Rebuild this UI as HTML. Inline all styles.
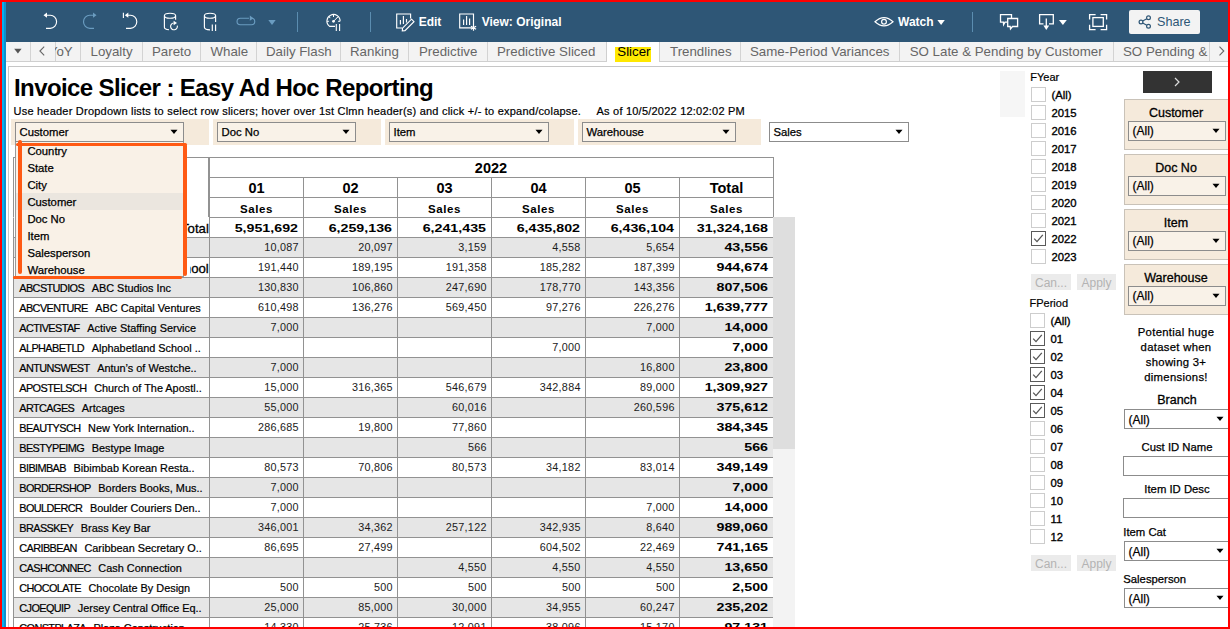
<!DOCTYPE html>
<html><head><meta charset="utf-8"><title>Invoice Slicer</title>
<style>
*{box-sizing:border-box;margin:0;padding:0}
html,body{width:1230px;height:629px;overflow:hidden;background:#fff;font-family:"Liberation Sans",sans-serif;color:#000}
.b,.t{position:absolute}
.t{white-space:nowrap}
svg.b{overflow:visible}
</style></head><body>
<div class="b" style="left:0px;top:0px;width:1230px;height:629px;background:#ff0000"></div>
<div class="b" style="left:2px;top:2px;width:1226px;height:625px;background:#fff"></div>
<div class="b" style="left:2px;top:2px;width:4px;height:625px;background:linear-gradient(90deg,#05b0f0 0,#05b0f0 50%,#0f8fcc 50%,#0f8fcc 100%)"></div>
<div class="b" style="left:6px;top:2px;width:1222px;height:40px;background:#2e5676"></div>
<div class="b" style="left:297px;top:12px;width:1px;height:20px;background:#5b8db0"></div>
<div class="b" style="left:370px;top:12px;width:1px;height:20px;background:#5b8db0"></div>
<div class="b" style="left:972px;top:12px;width:1px;height:20px;background:#5b8db0"></div>
<svg class="b" style="left:0;top:0" width="1230" height="44" viewBox="0 0 1230 44"><path d="M45.5 15.2 H50.3 A6.3 6.6 0 0 1 50.3 28.4 H46" fill="none" stroke="#ffffff" stroke-width="1.15"/><path d="M43.5 15.2 L47 12.6 L47 17.8 Z" fill="#ffffff"/><path d="M94.5 15.2 H89.8 A6.3 6.6 0 0 0 89.8 28.4 H94" fill="none" stroke="#6a9cc0" stroke-width="1.15"/><path d="M96.5 15.2 L93 12.6 L93 17.8 Z" fill="#6a9cc0"/><path d="M127 15.2 H130.5 A6.3 6.6 0 0 1 130.5 28.4 H126" fill="none" stroke="#ffffff" stroke-width="1.15"/><path d="M124.8 15.2 L128.3 12.6 L128.3 17.8 Z" fill="#ffffff"/><path d="M123.4 12.8 V18" stroke="#ffffff" stroke-width="1.15"/><ellipse cx="170" cy="15.7" rx="5.6" ry="2.5" fill="none" stroke="#ffffff" stroke-width="1.15"/><path d="M164.4 15.7 V27.3 A5.6 2.5 0 0 0 169 29.8" fill="none" stroke="#ffffff" stroke-width="1.15"/><path d="M175.6 15.7 V19.8" fill="none" stroke="#ffffff" stroke-width="1.15"/><path d="M177.3 25.6 A3.4 3.4 0 1 1 173.6 23" fill="none" stroke="#ffffff" stroke-width="1.15"/><path d="M173.6 20.8 L177 23 L173.6 25.2 Z" fill="#ffffff"/><ellipse cx="210" cy="15.7" rx="5.6" ry="2.5" fill="none" stroke="#ffffff" stroke-width="1.15"/><path d="M204.4 15.7 V27.3 A5.6 2.5 0 0 0 210 29.8" fill="none" stroke="#ffffff" stroke-width="1.15"/><path d="M215.6 15.7 V22" fill="none" stroke="#ffffff" stroke-width="1.15"/><path d="M212.3 24.5 V31 M215.6 24.5 V31" fill="none" stroke="#ffffff" stroke-width="1.15"/><path d="M249 18.2 H240.3 A3.2 3.2 0 0 0 240.3 24.7 H251.5 A3.2 3.2 0 0 0 251.5 18.2" fill="none" stroke="#6a9cc0" stroke-width="1.15"/><path d="M253.5 18.2 L249.8 15.6 L249.8 20.8 Z" fill="#6a9cc0"/><path d="M268.3 20 H275.7 L272 24.9 Z" fill="#6a9cc0"/><path d="M335 26.4 H329.6 A6.6 6.6 0 1 1 340.1 21.3" fill="none" stroke="#ffffff" stroke-width="1.1"/><path d="M333.5 15 V17 M326.9 21.3 H328.9 M338.1 21.3 H340.1 M328.9 16.7 L330.3 18.1 M338.1 16.7 L336.7 18.1" fill="none" stroke="#ffffff" stroke-width="1"/><circle cx="333.5" cy="21.3" r="1.4" fill="#ffffff"/><path d="M333.5 21.3 L337.3 17.5" stroke="#ffffff" stroke-width="1"/><path d="M336.3 24 V31 M339.6 24 V31" fill="none" stroke="#ffffff" stroke-width="1.1"/><path d="M402 28 H396.7 V14 H410.6 V18.5" fill="none" stroke="#ffffff" stroke-width="1.15"/><path d="M400.4 20 V24.6 M403.4 16 V24 M406.5 19 V22.6" fill="none" stroke="#ffffff" stroke-width="1.15"/><path d="M411.5 19.2 L414 21.7 L405 30.7 L402.3 30.9 L402.5 28.2 Z" fill="none" stroke="#ffffff" stroke-width="1.15"/><path d="M472 27.8 H459.7 V14 H473.5 V25" fill="none" stroke="#ffffff" stroke-width="1.15"/><path d="M463.6 19.5 V25 M466.6 16 V25 M469.6 18.5 V25" fill="none" stroke="#ffffff" stroke-width="1.15"/><path d="M473.5 24.8 V30.8 M470.9 26.3 L476.1 29.3 M470.9 29.3 L476.1 26.3" fill="none" stroke="#ffffff" stroke-width="1.2"/><path d="M875 21.8 Q884 13.5 893 21.8 Q884 30 875 21.8 Z" fill="none" stroke="#ffffff" stroke-width="1.2"/><circle cx="884" cy="21.8" r="2.4" fill="none" stroke="#ffffff" stroke-width="1.2"/><path d="M937.4 20 H944.8 L941.1 25 Z" fill="#ffffff"/><path d="M1007.5 22.2 H1005 L1003.6 24.6 L1003.4 22.2 H1000.5 V14.6 H1011.5 V18.4" fill="none" stroke="#ffffff" stroke-width="1.3"/><path d="M1007.7 18.5 H1017.6 V26.5 H1012.5 L1010.5 29 L1010.2 26.5 H1007.7 Z" fill="none" stroke="#ffffff" stroke-width="1.3"/><path d="M1043.5 23.8 H1039.6 V14.6 H1053.3 V23.8 H1049" fill="none" stroke="#ffffff" stroke-width="1.3"/><path d="M1046.3 18.5 V26" stroke="#ffffff" stroke-width="1.3"/><path d="M1043.4 25.4 H1049.2 L1046.3 29.9 Z" fill="#ffffff"/><path d="M1059 20 H1066.8 L1062.9 25 Z" fill="#ffffff"/><path d="M1089.6 19.4 V14.6 H1095.6 M1100.6 14.6 H1106.6 V19.4 M1106.6 24.8 V29.6 H1100.6 M1095.6 29.6 H1089.6 V24.8" fill="none" stroke="#ffffff" stroke-width="1.3"/><rect x="1092.9" y="17.6" width="10.4" height="8.8" fill="none" stroke="#ffffff" stroke-width="1.3"/></svg>
<div class="t" style="top:15.14px;font-size:12px;line-height:14.4px;font-weight:bold;color:#fff;left:418.7px;">Edit</div>
<div class="t" style="top:15.14px;font-size:12px;line-height:14.4px;font-weight:bold;color:#fff;left:481.7px;">View: Original</div>
<div class="t" style="top:15.14px;font-size:12px;line-height:14.4px;font-weight:bold;color:#fff;left:898px;">Watch</div>
<div class="b" style="left:1129px;top:10px;width:71px;height:24px;background:#f3f3f3;border-radius:2px"></div>
<svg class="b" style="left:1136px;top:14px" width="18" height="16" viewBox="1136 14 18 16"><g fill="none" stroke="#2e5676" stroke-width="1.2"><circle cx="1141" cy="22" r="1.9"/><circle cx="1148.5" cy="17.8" r="1.9"/><circle cx="1148.5" cy="26.2" r="1.9"/><path d="M1142.7 21 L1146.8 18.8 M1142.7 23 L1146.8 25.2"/></g></svg>
<div class="t" style="top:14.57px;font-size:12.6px;line-height:15.12px;color:#2e5676;left:1157px;">Share</div>
<div class="b" style="left:6px;top:42px;width:1222px;height:19px;background:#f3f3f3"></div>
<div class="b" style="left:6px;top:61px;width:1222px;height:1px;background:#cfcfcf"></div>
<div class="b" style="left:30px;top:42px;width:1px;height:19px;background:#d3d3d3"></div>
<div class="b" style="left:55px;top:42px;width:1px;height:19px;background:#d3d3d3"></div>
<div class="b" style="left:80px;top:42px;width:1px;height:19px;background:#d3d3d3"></div>
<div class="b" style="left:142px;top:42px;width:1px;height:19px;background:#d3d3d3"></div>
<div class="b" style="left:200px;top:42px;width:1px;height:19px;background:#d3d3d3"></div>
<div class="b" style="left:256px;top:42px;width:1px;height:19px;background:#d3d3d3"></div>
<div class="b" style="left:340px;top:42px;width:1px;height:19px;background:#d3d3d3"></div>
<div class="b" style="left:408px;top:42px;width:1px;height:19px;background:#d3d3d3"></div>
<div class="b" style="left:487px;top:42px;width:1px;height:19px;background:#d3d3d3"></div>
<div class="b" style="left:606px;top:42px;width:1px;height:19px;background:#d3d3d3"></div>
<div class="b" style="left:659px;top:42px;width:1px;height:19px;background:#d3d3d3"></div>
<div class="b" style="left:740px;top:42px;width:1px;height:19px;background:#d3d3d3"></div>
<div class="b" style="left:899px;top:42px;width:1px;height:19px;background:#d3d3d3"></div>
<div class="b" style="left:1113px;top:42px;width:1px;height:19px;background:#d3d3d3"></div>
<div class="b" style="left:1209px;top:42px;width:1px;height:19px;background:#d3d3d3"></div>
<div class="b" style="left:606px;top:42px;width:54px;height:20px;background:#fff;border-left:1px solid #cfcfcf;border-right:1px solid #cfcfcf"></div>
<div class="b" style="left:615px;top:47px;width:36px;height:15px;background:#ffe800"></div>
<svg class="b" style="left:0;top:42px" width="1230" height="20" viewBox="0 42 1230 20"><path d="M14.2 48.8 H21.6 L17.9 53.5 Z" fill="#555"/><path d="M44.2 46.6 L39.9 51 L44.2 55.4" fill="none" stroke="#666" stroke-width="1.1"/><path d="M1219.5 46.6 L1223.8 51 L1219.5 55.4" fill="none" stroke="#666" stroke-width="1.1"/></svg>
<div class="b" style="left:55px;top:42px;width:25px;height:19px;overflow:hidden"><div class="t" style="left:-6.2px;top:1.6px;font-size:13.3px;line-height:16px;color:#666">YoY</div></div>
<div class="t" style="top:43.61px;font-size:13.3px;line-height:15.96px;color:#666;left:90.5px;">Loyalty</div>
<div class="t" style="top:43.61px;font-size:13.3px;line-height:15.96px;color:#666;left:152px;">Pareto</div>
<div class="t" style="top:43.61px;font-size:13.3px;line-height:15.96px;color:#666;left:210.5px;">Whale</div>
<div class="t" style="top:43.61px;font-size:13.3px;line-height:15.96px;color:#666;left:266px;">Daily Flash</div>
<div class="t" style="top:43.61px;font-size:13.3px;line-height:15.96px;color:#666;left:350px;">Ranking</div>
<div class="t" style="top:43.61px;font-size:13.3px;line-height:15.96px;color:#666;left:419px;">Predictive</div>
<div class="t" style="top:43.61px;font-size:13.3px;line-height:15.96px;color:#666;left:497px;">Predictive Sliced</div>
<div class="t" style="top:43.61px;font-size:13.3px;line-height:15.96px;left:617.3px;">Slicer</div>
<div class="t" style="top:43.61px;font-size:13.3px;line-height:15.96px;color:#666;left:670px;">Trendlines</div>
<div class="t" style="top:43.61px;font-size:13.3px;line-height:15.96px;color:#666;left:750px;">Same-Period Variances</div>
<div class="t" style="top:43.61px;font-size:13.3px;line-height:15.96px;color:#666;left:909.7px;">SO Late &amp; Pending by Customer</div>
<div class="t" style="top:43.61px;font-size:13.3px;line-height:15.96px;color:#666;left:1123px;">SO Pending &amp;</div>
<div class="b" style="left:8px;top:66px;width:1220px;height:561px;border-left:1px solid #c6c6c6;border-top:1px solid #c6c6c6;background:#fff"></div>
<div class="t" style="top:74.48px;font-size:24px;line-height:28.8px;font-weight:bold;letter-spacing:-0.6px;left:14px;">Invoice Slicer : Easy Ad Hoc Reporting</div>
<div class="t" style="top:104.79px;font-size:11px;line-height:13.2px;letter-spacing:0.22px;-webkit-text-stroke:0.2px #000;left:13.5px;">Use header Dropdown lists to select row slicers; hover over 1st Clmn header(s) and click +/- to expand/colapse.</div>
<div class="t" style="top:104.79px;font-size:11px;line-height:13.2px;letter-spacing:0.22px;-webkit-text-stroke:0.2px #000;left:596.5px;">As of 10/5/2022 12:02:02 PM</div>
<div class="b" style="left:11px;top:119px;width:198px;height:26px;background:#f5eadb"></div>
<div class="b" style="left:15px;top:122px;width:169px;height:20px;background:#f9f2e8;border:1px solid #8c8c8c"></div>
<div class="t" style="top:126.20px;font-size:11.3px;line-height:13.56px;-webkit-text-stroke:0.25px #000;left:19.5px;">Customer</div>
<svg class="b" style="left:169.5px;top:129.0px" width="8" height="6" viewBox="0 0 8 6"><path d="M0.5 0.8 H7.5 L4 5 Z" fill="#000"/></svg>
<div class="b" style="left:213px;top:119px;width:168px;height:26px;background:#f5eadb"></div>
<div class="b" style="left:217px;top:122px;width:139px;height:20px;background:#f9f2e8;border:1px solid #8c8c8c"></div>
<div class="t" style="top:126.20px;font-size:11.3px;line-height:13.56px;-webkit-text-stroke:0.25px #000;left:221.5px;">Doc No</div>
<svg class="b" style="left:341.5px;top:129.0px" width="8" height="6" viewBox="0 0 8 6"><path d="M0.5 0.8 H7.5 L4 5 Z" fill="#000"/></svg>
<div class="b" style="left:385px;top:119px;width:189px;height:26px;background:#f5eadb"></div>
<div class="b" style="left:389px;top:122px;width:160px;height:20px;background:#f9f2e8;border:1px solid #8c8c8c"></div>
<div class="t" style="top:126.20px;font-size:11.3px;line-height:13.56px;-webkit-text-stroke:0.25px #000;left:393.5px;">Item</div>
<svg class="b" style="left:534.5px;top:129.0px" width="8" height="6" viewBox="0 0 8 6"><path d="M0.5 0.8 H7.5 L4 5 Z" fill="#000"/></svg>
<div class="b" style="left:578px;top:119px;width:183px;height:26px;background:#f5eadb"></div>
<div class="b" style="left:582px;top:122px;width:154px;height:20px;background:#f9f2e8;border:1px solid #8c8c8c"></div>
<div class="t" style="top:126.20px;font-size:11.3px;line-height:13.56px;-webkit-text-stroke:0.25px #000;left:586.5px;">Warehouse</div>
<svg class="b" style="left:721.5px;top:129.0px" width="8" height="6" viewBox="0 0 8 6"><path d="M0.5 0.8 H7.5 L4 5 Z" fill="#000"/></svg>
<div class="b" style="left:769px;top:122px;width:140px;height:20px;background:#fff;border:1px solid #8c8c8c"></div>
<div class="t" style="top:126.20px;font-size:11.3px;line-height:13.56px;-webkit-text-stroke:0.25px #000;left:773.5px;">Sales</div>
<svg class="b" style="left:894.5px;top:129.0px" width="8" height="6" viewBox="0 0 8 6"><path d="M0.5 0.8 H7.5 L4 5 Z" fill="#000"/></svg>
<div class="b" style="left:13px;top:157px;width:196px;height:61px;border:1px solid #929292;border-bottom:none;background:#fff"></div>
<div class="b" style="left:209px;top:157px;width:565px;height:21px;border:1px solid #929292;background:#fff"></div>
<div class="b" style="left:209px;top:177px;width:95px;height:21px;border:1px solid #929292;background:#fff"></div>
<div class="b" style="left:209px;top:197px;width:95px;height:21px;border:1px solid #929292;background:#fff"></div>
<div class="b" style="left:303px;top:177px;width:95px;height:21px;border:1px solid #929292;background:#fff"></div>
<div class="b" style="left:303px;top:197px;width:95px;height:21px;border:1px solid #929292;background:#fff"></div>
<div class="b" style="left:397px;top:177px;width:95px;height:21px;border:1px solid #929292;background:#fff"></div>
<div class="b" style="left:397px;top:197px;width:95px;height:21px;border:1px solid #929292;background:#fff"></div>
<div class="b" style="left:491px;top:177px;width:95px;height:21px;border:1px solid #929292;background:#fff"></div>
<div class="b" style="left:491px;top:197px;width:95px;height:21px;border:1px solid #929292;background:#fff"></div>
<div class="b" style="left:585px;top:177px;width:95px;height:21px;border:1px solid #929292;background:#fff"></div>
<div class="b" style="left:585px;top:197px;width:95px;height:21px;border:1px solid #929292;background:#fff"></div>
<div class="b" style="left:679px;top:177px;width:95px;height:21px;border:1px solid #929292;background:#fff"></div>
<div class="b" style="left:679px;top:197px;width:95px;height:21px;border:1px solid #929292;background:#fff"></div>
<div class="t" style="top:159.88px;font-size:14.5px;line-height:17.4px;font-weight:bold;left:341.0px;width:300px;text-align:center;">2022</div>
<div class="t" style="top:179.58px;font-size:14.5px;line-height:17.4px;font-weight:bold;left:106.5px;width:300px;text-align:center;">01</div>
<div class="t" style="top:202.72px;font-size:11.5px;line-height:13.8px;font-weight:bold;letter-spacing:0.6px;left:106.5px;width:300px;text-align:center;">Sales</div>
<div class="t" style="top:179.58px;font-size:14.5px;line-height:17.4px;font-weight:bold;left:200.5px;width:300px;text-align:center;">02</div>
<div class="t" style="top:202.72px;font-size:11.5px;line-height:13.8px;font-weight:bold;letter-spacing:0.6px;left:200.5px;width:300px;text-align:center;">Sales</div>
<div class="t" style="top:179.58px;font-size:14.5px;line-height:17.4px;font-weight:bold;left:294.5px;width:300px;text-align:center;">03</div>
<div class="t" style="top:202.72px;font-size:11.5px;line-height:13.8px;font-weight:bold;letter-spacing:0.6px;left:294.5px;width:300px;text-align:center;">Sales</div>
<div class="t" style="top:179.58px;font-size:14.5px;line-height:17.4px;font-weight:bold;left:388.5px;width:300px;text-align:center;">04</div>
<div class="t" style="top:202.72px;font-size:11.5px;line-height:13.8px;font-weight:bold;letter-spacing:0.6px;left:388.5px;width:300px;text-align:center;">Sales</div>
<div class="t" style="top:179.58px;font-size:14.5px;line-height:17.4px;font-weight:bold;left:482.5px;width:300px;text-align:center;">05</div>
<div class="t" style="top:202.72px;font-size:11.5px;line-height:13.8px;font-weight:bold;letter-spacing:0.6px;left:482.5px;width:300px;text-align:center;">Sales</div>
<div class="t" style="top:179.58px;font-size:14.5px;line-height:17.4px;font-weight:bold;left:576.5px;width:300px;text-align:center;">Total</div>
<div class="t" style="top:202.72px;font-size:11.5px;line-height:13.8px;font-weight:bold;letter-spacing:0.6px;left:576.5px;width:300px;text-align:center;">Sales</div>
<div class="b" style="left:13px;top:217px;width:761px;height:21px;border:1px solid #929292;border-top-color:#fff;background:#fff"></div>
<div class="b" style="left:209px;top:217px;width:95px;height:21px;border:1px solid #929292"></div>
<div class="b" style="left:303px;top:217px;width:95px;height:21px;border:1px solid #929292"></div>
<div class="b" style="left:397px;top:217px;width:95px;height:21px;border:1px solid #929292"></div>
<div class="b" style="left:491px;top:217px;width:95px;height:21px;border:1px solid #929292"></div>
<div class="b" style="left:585px;top:217px;width:95px;height:21px;border:1px solid #929292"></div>
<div class="b" style="left:679px;top:217px;width:95px;height:21px;border:1px solid #929292"></div>
<div class="b" style="left:187px;top:218px;width:21.8px;height:19px;overflow:hidden">
<div class="t" style="top:2.61px;font-size:13.2px;line-height:15.84px;-webkit-text-stroke:0.3px #000;left:-378.20px;width:400px;text-align:right;">Grand Total</div>
</div>
<div class="t" style="top:221.70px;font-size:11.3px;line-height:13.56px;font-weight:bold;left:-101.70px;width:400px;text-align:right;transform:scaleX(1.26);transform-origin:100% 50%">5,951,692</div>
<div class="t" style="top:221.70px;font-size:11.3px;line-height:13.56px;font-weight:bold;left:-7.70px;width:400px;text-align:right;transform:scaleX(1.26);transform-origin:100% 50%">6,259,136</div>
<div class="t" style="top:221.70px;font-size:11.3px;line-height:13.56px;font-weight:bold;left:86.30px;width:400px;text-align:right;transform:scaleX(1.26);transform-origin:100% 50%">6,241,435</div>
<div class="t" style="top:221.70px;font-size:11.3px;line-height:13.56px;font-weight:bold;left:180.30px;width:400px;text-align:right;transform:scaleX(1.26);transform-origin:100% 50%">6,435,802</div>
<div class="t" style="top:221.70px;font-size:11.3px;line-height:13.56px;font-weight:bold;left:274.30px;width:400px;text-align:right;transform:scaleX(1.26);transform-origin:100% 50%">6,436,104</div>
<div class="t" style="top:221.70px;font-size:11.3px;line-height:13.56px;font-weight:bold;left:368.30px;width:400px;text-align:right;transform:scaleX(1.26);transform-origin:100% 50%">31,324,168</div>
<div class="b" style="left:13px;top:237px;width:197px;height:21px;border:1px solid #929292;background:#e6e6e6"></div>
<div class="b" style="left:209px;top:237px;width:95px;height:21px;border:1px solid #929292;background:#e6e6e6"></div>
<div class="b" style="left:303px;top:237px;width:95px;height:21px;border:1px solid #929292;background:#e6e6e6"></div>
<div class="b" style="left:397px;top:237px;width:95px;height:21px;border:1px solid #929292;background:#e6e6e6"></div>
<div class="b" style="left:491px;top:237px;width:95px;height:21px;border:1px solid #929292;background:#e6e6e6"></div>
<div class="b" style="left:585px;top:237px;width:95px;height:21px;border:1px solid #929292;background:#e6e6e6"></div>
<div class="b" style="left:679px;top:237px;width:95px;height:21px;border:1px solid #929292;background:#e6e6e6"></div>
<div class="t" style="top:240.78px;font-size:10.8px;line-height:12.96px;color:#1a1a1a;letter-spacing:0.25px;left:-101.35px;width:400px;text-align:right;">10,087</div>
<div class="t" style="top:240.78px;font-size:10.8px;line-height:12.96px;color:#1a1a1a;letter-spacing:0.25px;left:-7.35px;width:400px;text-align:right;">20,097</div>
<div class="t" style="top:240.78px;font-size:10.8px;line-height:12.96px;color:#1a1a1a;letter-spacing:0.25px;left:86.65px;width:400px;text-align:right;">3,159</div>
<div class="t" style="top:240.78px;font-size:10.8px;line-height:12.96px;color:#1a1a1a;letter-spacing:0.25px;left:180.65px;width:400px;text-align:right;">4,558</div>
<div class="t" style="top:240.78px;font-size:10.8px;line-height:12.96px;color:#1a1a1a;letter-spacing:0.25px;left:274.65px;width:400px;text-align:right;">5,654</div>
<div class="t" style="top:241.40px;font-size:11.3px;line-height:13.56px;font-weight:bold;left:368.30px;width:400px;text-align:right;transform:scaleX(1.26);transform-origin:100% 50%">43,556</div>
<div class="b" style="left:13px;top:257px;width:197px;height:21px;border:1px solid #929292;background:#fff"></div>
<div class="b" style="left:209px;top:257px;width:95px;height:21px;border:1px solid #929292;background:#fff"></div>
<div class="b" style="left:303px;top:257px;width:95px;height:21px;border:1px solid #929292;background:#fff"></div>
<div class="b" style="left:397px;top:257px;width:95px;height:21px;border:1px solid #929292;background:#fff"></div>
<div class="b" style="left:491px;top:257px;width:95px;height:21px;border:1px solid #929292;background:#fff"></div>
<div class="b" style="left:585px;top:257px;width:95px;height:21px;border:1px solid #929292;background:#fff"></div>
<div class="b" style="left:679px;top:257px;width:95px;height:21px;border:1px solid #929292;background:#fff"></div>
<div class="t" style="top:260.78px;font-size:10.8px;line-height:12.96px;color:#1a1a1a;letter-spacing:0.25px;left:-101.35px;width:400px;text-align:right;">191,440</div>
<div class="t" style="top:260.78px;font-size:10.8px;line-height:12.96px;color:#1a1a1a;letter-spacing:0.25px;left:-7.35px;width:400px;text-align:right;">189,195</div>
<div class="t" style="top:260.78px;font-size:10.8px;line-height:12.96px;color:#1a1a1a;letter-spacing:0.25px;left:86.65px;width:400px;text-align:right;">191,358</div>
<div class="t" style="top:260.78px;font-size:10.8px;line-height:12.96px;color:#1a1a1a;letter-spacing:0.25px;left:180.65px;width:400px;text-align:right;">185,282</div>
<div class="t" style="top:260.78px;font-size:10.8px;line-height:12.96px;color:#1a1a1a;letter-spacing:0.25px;left:274.65px;width:400px;text-align:right;">187,399</div>
<div class="t" style="top:261.40px;font-size:11.3px;line-height:13.56px;font-weight:bold;left:368.30px;width:400px;text-align:right;transform:scaleX(1.26);transform-origin:100% 50%">944,674</div>
<div class="b" style="left:13px;top:277px;width:197px;height:21px;border:1px solid #929292;background:#e6e6e6"></div>
<div class="b" style="left:209px;top:277px;width:95px;height:21px;border:1px solid #929292;background:#e6e6e6"></div>
<div class="b" style="left:303px;top:277px;width:95px;height:21px;border:1px solid #929292;background:#e6e6e6"></div>
<div class="b" style="left:397px;top:277px;width:95px;height:21px;border:1px solid #929292;background:#e6e6e6"></div>
<div class="b" style="left:491px;top:277px;width:95px;height:21px;border:1px solid #929292;background:#e6e6e6"></div>
<div class="b" style="left:585px;top:277px;width:95px;height:21px;border:1px solid #929292;background:#e6e6e6"></div>
<div class="b" style="left:679px;top:277px;width:95px;height:21px;border:1px solid #929292;background:#e6e6e6"></div>
<div class="t" style="top:282.08px;font-size:10.9px;line-height:13.08px;-webkit-text-stroke:0.2px #000;left:19.3px;"><span style="margin-right:7.6px;letter-spacing:-0.6px">ABCSTUDIOS</span>ABC Studios Inc</div>
<div class="t" style="top:280.78px;font-size:10.8px;line-height:12.96px;color:#1a1a1a;letter-spacing:0.25px;left:-101.35px;width:400px;text-align:right;">130,830</div>
<div class="t" style="top:280.78px;font-size:10.8px;line-height:12.96px;color:#1a1a1a;letter-spacing:0.25px;left:-7.35px;width:400px;text-align:right;">106,860</div>
<div class="t" style="top:280.78px;font-size:10.8px;line-height:12.96px;color:#1a1a1a;letter-spacing:0.25px;left:86.65px;width:400px;text-align:right;">247,690</div>
<div class="t" style="top:280.78px;font-size:10.8px;line-height:12.96px;color:#1a1a1a;letter-spacing:0.25px;left:180.65px;width:400px;text-align:right;">178,770</div>
<div class="t" style="top:280.78px;font-size:10.8px;line-height:12.96px;color:#1a1a1a;letter-spacing:0.25px;left:274.65px;width:400px;text-align:right;">143,356</div>
<div class="t" style="top:281.40px;font-size:11.3px;line-height:13.56px;font-weight:bold;left:368.30px;width:400px;text-align:right;transform:scaleX(1.26);transform-origin:100% 50%">807,506</div>
<div class="b" style="left:13px;top:297px;width:197px;height:21px;border:1px solid #929292;background:#fff"></div>
<div class="b" style="left:209px;top:297px;width:95px;height:21px;border:1px solid #929292;background:#fff"></div>
<div class="b" style="left:303px;top:297px;width:95px;height:21px;border:1px solid #929292;background:#fff"></div>
<div class="b" style="left:397px;top:297px;width:95px;height:21px;border:1px solid #929292;background:#fff"></div>
<div class="b" style="left:491px;top:297px;width:95px;height:21px;border:1px solid #929292;background:#fff"></div>
<div class="b" style="left:585px;top:297px;width:95px;height:21px;border:1px solid #929292;background:#fff"></div>
<div class="b" style="left:679px;top:297px;width:95px;height:21px;border:1px solid #929292;background:#fff"></div>
<div class="t" style="top:302.08px;font-size:10.9px;line-height:13.08px;-webkit-text-stroke:0.2px #000;left:19.3px;"><span style="margin-right:7.6px;letter-spacing:-0.6px">ABCVENTURE</span>ABC Capital Ventures</div>
<div class="t" style="top:300.78px;font-size:10.8px;line-height:12.96px;color:#1a1a1a;letter-spacing:0.25px;left:-101.35px;width:400px;text-align:right;">610,498</div>
<div class="t" style="top:300.78px;font-size:10.8px;line-height:12.96px;color:#1a1a1a;letter-spacing:0.25px;left:-7.35px;width:400px;text-align:right;">136,276</div>
<div class="t" style="top:300.78px;font-size:10.8px;line-height:12.96px;color:#1a1a1a;letter-spacing:0.25px;left:86.65px;width:400px;text-align:right;">569,450</div>
<div class="t" style="top:300.78px;font-size:10.8px;line-height:12.96px;color:#1a1a1a;letter-spacing:0.25px;left:180.65px;width:400px;text-align:right;">97,276</div>
<div class="t" style="top:300.78px;font-size:10.8px;line-height:12.96px;color:#1a1a1a;letter-spacing:0.25px;left:274.65px;width:400px;text-align:right;">226,276</div>
<div class="t" style="top:301.40px;font-size:11.3px;line-height:13.56px;font-weight:bold;left:368.30px;width:400px;text-align:right;transform:scaleX(1.26);transform-origin:100% 50%">1,639,777</div>
<div class="b" style="left:13px;top:317px;width:197px;height:21px;border:1px solid #929292;background:#e6e6e6"></div>
<div class="b" style="left:209px;top:317px;width:95px;height:21px;border:1px solid #929292;background:#e6e6e6"></div>
<div class="b" style="left:303px;top:317px;width:95px;height:21px;border:1px solid #929292;background:#e6e6e6"></div>
<div class="b" style="left:397px;top:317px;width:95px;height:21px;border:1px solid #929292;background:#e6e6e6"></div>
<div class="b" style="left:491px;top:317px;width:95px;height:21px;border:1px solid #929292;background:#e6e6e6"></div>
<div class="b" style="left:585px;top:317px;width:95px;height:21px;border:1px solid #929292;background:#e6e6e6"></div>
<div class="b" style="left:679px;top:317px;width:95px;height:21px;border:1px solid #929292;background:#e6e6e6"></div>
<div class="t" style="top:322.08px;font-size:10.9px;line-height:13.08px;-webkit-text-stroke:0.2px #000;left:19.3px;"><span style="margin-right:7.6px;letter-spacing:-0.6px">ACTIVESTAF</span>Active Staffing Service</div>
<div class="t" style="top:320.78px;font-size:10.8px;line-height:12.96px;color:#1a1a1a;letter-spacing:0.25px;left:-101.35px;width:400px;text-align:right;">7,000</div>
<div class="t" style="top:320.78px;font-size:10.8px;line-height:12.96px;color:#1a1a1a;letter-spacing:0.25px;left:274.65px;width:400px;text-align:right;">7,000</div>
<div class="t" style="top:321.40px;font-size:11.3px;line-height:13.56px;font-weight:bold;left:368.30px;width:400px;text-align:right;transform:scaleX(1.26);transform-origin:100% 50%">14,000</div>
<div class="b" style="left:13px;top:337px;width:197px;height:21px;border:1px solid #929292;background:#fff"></div>
<div class="b" style="left:209px;top:337px;width:95px;height:21px;border:1px solid #929292;background:#fff"></div>
<div class="b" style="left:303px;top:337px;width:95px;height:21px;border:1px solid #929292;background:#fff"></div>
<div class="b" style="left:397px;top:337px;width:95px;height:21px;border:1px solid #929292;background:#fff"></div>
<div class="b" style="left:491px;top:337px;width:95px;height:21px;border:1px solid #929292;background:#fff"></div>
<div class="b" style="left:585px;top:337px;width:95px;height:21px;border:1px solid #929292;background:#fff"></div>
<div class="b" style="left:679px;top:337px;width:95px;height:21px;border:1px solid #929292;background:#fff"></div>
<div class="t" style="top:342.08px;font-size:10.9px;line-height:13.08px;-webkit-text-stroke:0.2px #000;left:19.3px;"><span style="margin-right:7.6px;letter-spacing:-0.6px">ALPHABETLD</span>Alphabetland School ..</div>
<div class="t" style="top:340.78px;font-size:10.8px;line-height:12.96px;color:#1a1a1a;letter-spacing:0.25px;left:180.65px;width:400px;text-align:right;">7,000</div>
<div class="t" style="top:341.40px;font-size:11.3px;line-height:13.56px;font-weight:bold;left:368.30px;width:400px;text-align:right;transform:scaleX(1.26);transform-origin:100% 50%">7,000</div>
<div class="b" style="left:13px;top:357px;width:197px;height:21px;border:1px solid #929292;background:#e6e6e6"></div>
<div class="b" style="left:209px;top:357px;width:95px;height:21px;border:1px solid #929292;background:#e6e6e6"></div>
<div class="b" style="left:303px;top:357px;width:95px;height:21px;border:1px solid #929292;background:#e6e6e6"></div>
<div class="b" style="left:397px;top:357px;width:95px;height:21px;border:1px solid #929292;background:#e6e6e6"></div>
<div class="b" style="left:491px;top:357px;width:95px;height:21px;border:1px solid #929292;background:#e6e6e6"></div>
<div class="b" style="left:585px;top:357px;width:95px;height:21px;border:1px solid #929292;background:#e6e6e6"></div>
<div class="b" style="left:679px;top:357px;width:95px;height:21px;border:1px solid #929292;background:#e6e6e6"></div>
<div class="t" style="top:362.08px;font-size:10.9px;line-height:13.08px;-webkit-text-stroke:0.2px #000;left:19.3px;"><span style="margin-right:7.6px;letter-spacing:-0.6px">ANTUNSWEST</span>Antun’s of Westche..</div>
<div class="t" style="top:360.78px;font-size:10.8px;line-height:12.96px;color:#1a1a1a;letter-spacing:0.25px;left:-101.35px;width:400px;text-align:right;">7,000</div>
<div class="t" style="top:360.78px;font-size:10.8px;line-height:12.96px;color:#1a1a1a;letter-spacing:0.25px;left:274.65px;width:400px;text-align:right;">16,800</div>
<div class="t" style="top:361.40px;font-size:11.3px;line-height:13.56px;font-weight:bold;left:368.30px;width:400px;text-align:right;transform:scaleX(1.26);transform-origin:100% 50%">23,800</div>
<div class="b" style="left:13px;top:377px;width:197px;height:21px;border:1px solid #929292;background:#fff"></div>
<div class="b" style="left:209px;top:377px;width:95px;height:21px;border:1px solid #929292;background:#fff"></div>
<div class="b" style="left:303px;top:377px;width:95px;height:21px;border:1px solid #929292;background:#fff"></div>
<div class="b" style="left:397px;top:377px;width:95px;height:21px;border:1px solid #929292;background:#fff"></div>
<div class="b" style="left:491px;top:377px;width:95px;height:21px;border:1px solid #929292;background:#fff"></div>
<div class="b" style="left:585px;top:377px;width:95px;height:21px;border:1px solid #929292;background:#fff"></div>
<div class="b" style="left:679px;top:377px;width:95px;height:21px;border:1px solid #929292;background:#fff"></div>
<div class="t" style="top:382.08px;font-size:10.9px;line-height:13.08px;-webkit-text-stroke:0.2px #000;left:19.3px;"><span style="margin-right:7.6px;letter-spacing:-0.6px">APOSTELSCH</span>Church of The Apostl..</div>
<div class="t" style="top:380.78px;font-size:10.8px;line-height:12.96px;color:#1a1a1a;letter-spacing:0.25px;left:-101.35px;width:400px;text-align:right;">15,000</div>
<div class="t" style="top:380.78px;font-size:10.8px;line-height:12.96px;color:#1a1a1a;letter-spacing:0.25px;left:-7.35px;width:400px;text-align:right;">316,365</div>
<div class="t" style="top:380.78px;font-size:10.8px;line-height:12.96px;color:#1a1a1a;letter-spacing:0.25px;left:86.65px;width:400px;text-align:right;">546,679</div>
<div class="t" style="top:380.78px;font-size:10.8px;line-height:12.96px;color:#1a1a1a;letter-spacing:0.25px;left:180.65px;width:400px;text-align:right;">342,884</div>
<div class="t" style="top:380.78px;font-size:10.8px;line-height:12.96px;color:#1a1a1a;letter-spacing:0.25px;left:274.65px;width:400px;text-align:right;">89,000</div>
<div class="t" style="top:381.40px;font-size:11.3px;line-height:13.56px;font-weight:bold;left:368.30px;width:400px;text-align:right;transform:scaleX(1.26);transform-origin:100% 50%">1,309,927</div>
<div class="b" style="left:13px;top:397px;width:197px;height:21px;border:1px solid #929292;background:#e6e6e6"></div>
<div class="b" style="left:209px;top:397px;width:95px;height:21px;border:1px solid #929292;background:#e6e6e6"></div>
<div class="b" style="left:303px;top:397px;width:95px;height:21px;border:1px solid #929292;background:#e6e6e6"></div>
<div class="b" style="left:397px;top:397px;width:95px;height:21px;border:1px solid #929292;background:#e6e6e6"></div>
<div class="b" style="left:491px;top:397px;width:95px;height:21px;border:1px solid #929292;background:#e6e6e6"></div>
<div class="b" style="left:585px;top:397px;width:95px;height:21px;border:1px solid #929292;background:#e6e6e6"></div>
<div class="b" style="left:679px;top:397px;width:95px;height:21px;border:1px solid #929292;background:#e6e6e6"></div>
<div class="t" style="top:402.08px;font-size:10.9px;line-height:13.08px;-webkit-text-stroke:0.2px #000;left:19.3px;"><span style="margin-right:7.6px;letter-spacing:-0.6px">ARTCAGES</span>Artcages</div>
<div class="t" style="top:400.78px;font-size:10.8px;line-height:12.96px;color:#1a1a1a;letter-spacing:0.25px;left:-101.35px;width:400px;text-align:right;">55,000</div>
<div class="t" style="top:400.78px;font-size:10.8px;line-height:12.96px;color:#1a1a1a;letter-spacing:0.25px;left:86.65px;width:400px;text-align:right;">60,016</div>
<div class="t" style="top:400.78px;font-size:10.8px;line-height:12.96px;color:#1a1a1a;letter-spacing:0.25px;left:274.65px;width:400px;text-align:right;">260,596</div>
<div class="t" style="top:401.40px;font-size:11.3px;line-height:13.56px;font-weight:bold;left:368.30px;width:400px;text-align:right;transform:scaleX(1.26);transform-origin:100% 50%">375,612</div>
<div class="b" style="left:13px;top:417px;width:197px;height:21px;border:1px solid #929292;background:#fff"></div>
<div class="b" style="left:209px;top:417px;width:95px;height:21px;border:1px solid #929292;background:#fff"></div>
<div class="b" style="left:303px;top:417px;width:95px;height:21px;border:1px solid #929292;background:#fff"></div>
<div class="b" style="left:397px;top:417px;width:95px;height:21px;border:1px solid #929292;background:#fff"></div>
<div class="b" style="left:491px;top:417px;width:95px;height:21px;border:1px solid #929292;background:#fff"></div>
<div class="b" style="left:585px;top:417px;width:95px;height:21px;border:1px solid #929292;background:#fff"></div>
<div class="b" style="left:679px;top:417px;width:95px;height:21px;border:1px solid #929292;background:#fff"></div>
<div class="t" style="top:422.08px;font-size:10.9px;line-height:13.08px;-webkit-text-stroke:0.2px #000;left:19.3px;"><span style="margin-right:7.6px;letter-spacing:-0.6px">BEAUTYSCH</span>New York Internation..</div>
<div class="t" style="top:420.78px;font-size:10.8px;line-height:12.96px;color:#1a1a1a;letter-spacing:0.25px;left:-101.35px;width:400px;text-align:right;">286,685</div>
<div class="t" style="top:420.78px;font-size:10.8px;line-height:12.96px;color:#1a1a1a;letter-spacing:0.25px;left:-7.35px;width:400px;text-align:right;">19,800</div>
<div class="t" style="top:420.78px;font-size:10.8px;line-height:12.96px;color:#1a1a1a;letter-spacing:0.25px;left:86.65px;width:400px;text-align:right;">77,860</div>
<div class="t" style="top:421.40px;font-size:11.3px;line-height:13.56px;font-weight:bold;left:368.30px;width:400px;text-align:right;transform:scaleX(1.26);transform-origin:100% 50%">384,345</div>
<div class="b" style="left:13px;top:437px;width:197px;height:21px;border:1px solid #929292;background:#e6e6e6"></div>
<div class="b" style="left:209px;top:437px;width:95px;height:21px;border:1px solid #929292;background:#e6e6e6"></div>
<div class="b" style="left:303px;top:437px;width:95px;height:21px;border:1px solid #929292;background:#e6e6e6"></div>
<div class="b" style="left:397px;top:437px;width:95px;height:21px;border:1px solid #929292;background:#e6e6e6"></div>
<div class="b" style="left:491px;top:437px;width:95px;height:21px;border:1px solid #929292;background:#e6e6e6"></div>
<div class="b" style="left:585px;top:437px;width:95px;height:21px;border:1px solid #929292;background:#e6e6e6"></div>
<div class="b" style="left:679px;top:437px;width:95px;height:21px;border:1px solid #929292;background:#e6e6e6"></div>
<div class="t" style="top:442.08px;font-size:10.9px;line-height:13.08px;-webkit-text-stroke:0.2px #000;left:19.3px;"><span style="margin-right:7.6px;letter-spacing:-0.6px">BESTYPEIMG</span>Bestype Image</div>
<div class="t" style="top:440.78px;font-size:10.8px;line-height:12.96px;color:#1a1a1a;letter-spacing:0.25px;left:86.65px;width:400px;text-align:right;">566</div>
<div class="t" style="top:441.40px;font-size:11.3px;line-height:13.56px;font-weight:bold;left:368.30px;width:400px;text-align:right;transform:scaleX(1.26);transform-origin:100% 50%">566</div>
<div class="b" style="left:13px;top:457px;width:197px;height:21px;border:1px solid #929292;background:#fff"></div>
<div class="b" style="left:209px;top:457px;width:95px;height:21px;border:1px solid #929292;background:#fff"></div>
<div class="b" style="left:303px;top:457px;width:95px;height:21px;border:1px solid #929292;background:#fff"></div>
<div class="b" style="left:397px;top:457px;width:95px;height:21px;border:1px solid #929292;background:#fff"></div>
<div class="b" style="left:491px;top:457px;width:95px;height:21px;border:1px solid #929292;background:#fff"></div>
<div class="b" style="left:585px;top:457px;width:95px;height:21px;border:1px solid #929292;background:#fff"></div>
<div class="b" style="left:679px;top:457px;width:95px;height:21px;border:1px solid #929292;background:#fff"></div>
<div class="t" style="top:462.08px;font-size:10.9px;line-height:13.08px;-webkit-text-stroke:0.2px #000;left:19.3px;"><span style="margin-right:7.6px;letter-spacing:-0.6px">BIBIMBAB</span>Bibimbab Korean Resta..</div>
<div class="t" style="top:460.78px;font-size:10.8px;line-height:12.96px;color:#1a1a1a;letter-spacing:0.25px;left:-101.35px;width:400px;text-align:right;">80,573</div>
<div class="t" style="top:460.78px;font-size:10.8px;line-height:12.96px;color:#1a1a1a;letter-spacing:0.25px;left:-7.35px;width:400px;text-align:right;">70,806</div>
<div class="t" style="top:460.78px;font-size:10.8px;line-height:12.96px;color:#1a1a1a;letter-spacing:0.25px;left:86.65px;width:400px;text-align:right;">80,573</div>
<div class="t" style="top:460.78px;font-size:10.8px;line-height:12.96px;color:#1a1a1a;letter-spacing:0.25px;left:180.65px;width:400px;text-align:right;">34,182</div>
<div class="t" style="top:460.78px;font-size:10.8px;line-height:12.96px;color:#1a1a1a;letter-spacing:0.25px;left:274.65px;width:400px;text-align:right;">83,014</div>
<div class="t" style="top:461.40px;font-size:11.3px;line-height:13.56px;font-weight:bold;left:368.30px;width:400px;text-align:right;transform:scaleX(1.26);transform-origin:100% 50%">349,149</div>
<div class="b" style="left:13px;top:477px;width:197px;height:21px;border:1px solid #929292;background:#e6e6e6"></div>
<div class="b" style="left:209px;top:477px;width:95px;height:21px;border:1px solid #929292;background:#e6e6e6"></div>
<div class="b" style="left:303px;top:477px;width:95px;height:21px;border:1px solid #929292;background:#e6e6e6"></div>
<div class="b" style="left:397px;top:477px;width:95px;height:21px;border:1px solid #929292;background:#e6e6e6"></div>
<div class="b" style="left:491px;top:477px;width:95px;height:21px;border:1px solid #929292;background:#e6e6e6"></div>
<div class="b" style="left:585px;top:477px;width:95px;height:21px;border:1px solid #929292;background:#e6e6e6"></div>
<div class="b" style="left:679px;top:477px;width:95px;height:21px;border:1px solid #929292;background:#e6e6e6"></div>
<div class="t" style="top:482.08px;font-size:10.9px;line-height:13.08px;-webkit-text-stroke:0.2px #000;left:19.3px;"><span style="margin-right:7.6px;letter-spacing:-0.6px">BORDERSHOP</span>Borders Books, Mus..</div>
<div class="t" style="top:480.78px;font-size:10.8px;line-height:12.96px;color:#1a1a1a;letter-spacing:0.25px;left:-101.35px;width:400px;text-align:right;">7,000</div>
<div class="t" style="top:481.40px;font-size:11.3px;line-height:13.56px;font-weight:bold;left:368.30px;width:400px;text-align:right;transform:scaleX(1.26);transform-origin:100% 50%">7,000</div>
<div class="b" style="left:13px;top:497px;width:197px;height:21px;border:1px solid #929292;background:#fff"></div>
<div class="b" style="left:209px;top:497px;width:95px;height:21px;border:1px solid #929292;background:#fff"></div>
<div class="b" style="left:303px;top:497px;width:95px;height:21px;border:1px solid #929292;background:#fff"></div>
<div class="b" style="left:397px;top:497px;width:95px;height:21px;border:1px solid #929292;background:#fff"></div>
<div class="b" style="left:491px;top:497px;width:95px;height:21px;border:1px solid #929292;background:#fff"></div>
<div class="b" style="left:585px;top:497px;width:95px;height:21px;border:1px solid #929292;background:#fff"></div>
<div class="b" style="left:679px;top:497px;width:95px;height:21px;border:1px solid #929292;background:#fff"></div>
<div class="t" style="top:502.08px;font-size:10.9px;line-height:13.08px;-webkit-text-stroke:0.2px #000;left:19.3px;"><span style="margin-right:7.6px;letter-spacing:-0.6px">BOULDERCR</span>Boulder Couriers Den..</div>
<div class="t" style="top:500.78px;font-size:10.8px;line-height:12.96px;color:#1a1a1a;letter-spacing:0.25px;left:-101.35px;width:400px;text-align:right;">7,000</div>
<div class="t" style="top:500.78px;font-size:10.8px;line-height:12.96px;color:#1a1a1a;letter-spacing:0.25px;left:274.65px;width:400px;text-align:right;">7,000</div>
<div class="t" style="top:501.40px;font-size:11.3px;line-height:13.56px;font-weight:bold;left:368.30px;width:400px;text-align:right;transform:scaleX(1.26);transform-origin:100% 50%">14,000</div>
<div class="b" style="left:13px;top:517px;width:197px;height:21px;border:1px solid #929292;background:#e6e6e6"></div>
<div class="b" style="left:209px;top:517px;width:95px;height:21px;border:1px solid #929292;background:#e6e6e6"></div>
<div class="b" style="left:303px;top:517px;width:95px;height:21px;border:1px solid #929292;background:#e6e6e6"></div>
<div class="b" style="left:397px;top:517px;width:95px;height:21px;border:1px solid #929292;background:#e6e6e6"></div>
<div class="b" style="left:491px;top:517px;width:95px;height:21px;border:1px solid #929292;background:#e6e6e6"></div>
<div class="b" style="left:585px;top:517px;width:95px;height:21px;border:1px solid #929292;background:#e6e6e6"></div>
<div class="b" style="left:679px;top:517px;width:95px;height:21px;border:1px solid #929292;background:#e6e6e6"></div>
<div class="t" style="top:522.08px;font-size:10.9px;line-height:13.08px;-webkit-text-stroke:0.2px #000;left:19.3px;"><span style="margin-right:7.6px;letter-spacing:-0.6px">BRASSKEY</span>Brass Key Bar</div>
<div class="t" style="top:520.78px;font-size:10.8px;line-height:12.96px;color:#1a1a1a;letter-spacing:0.25px;left:-101.35px;width:400px;text-align:right;">346,001</div>
<div class="t" style="top:520.78px;font-size:10.8px;line-height:12.96px;color:#1a1a1a;letter-spacing:0.25px;left:-7.35px;width:400px;text-align:right;">34,362</div>
<div class="t" style="top:520.78px;font-size:10.8px;line-height:12.96px;color:#1a1a1a;letter-spacing:0.25px;left:86.65px;width:400px;text-align:right;">257,122</div>
<div class="t" style="top:520.78px;font-size:10.8px;line-height:12.96px;color:#1a1a1a;letter-spacing:0.25px;left:180.65px;width:400px;text-align:right;">342,935</div>
<div class="t" style="top:520.78px;font-size:10.8px;line-height:12.96px;color:#1a1a1a;letter-spacing:0.25px;left:274.65px;width:400px;text-align:right;">8,640</div>
<div class="t" style="top:521.40px;font-size:11.3px;line-height:13.56px;font-weight:bold;left:368.30px;width:400px;text-align:right;transform:scaleX(1.26);transform-origin:100% 50%">989,060</div>
<div class="b" style="left:13px;top:537px;width:197px;height:21px;border:1px solid #929292;background:#fff"></div>
<div class="b" style="left:209px;top:537px;width:95px;height:21px;border:1px solid #929292;background:#fff"></div>
<div class="b" style="left:303px;top:537px;width:95px;height:21px;border:1px solid #929292;background:#fff"></div>
<div class="b" style="left:397px;top:537px;width:95px;height:21px;border:1px solid #929292;background:#fff"></div>
<div class="b" style="left:491px;top:537px;width:95px;height:21px;border:1px solid #929292;background:#fff"></div>
<div class="b" style="left:585px;top:537px;width:95px;height:21px;border:1px solid #929292;background:#fff"></div>
<div class="b" style="left:679px;top:537px;width:95px;height:21px;border:1px solid #929292;background:#fff"></div>
<div class="t" style="top:542.08px;font-size:10.9px;line-height:13.08px;-webkit-text-stroke:0.2px #000;left:19.3px;"><span style="margin-right:7.6px;letter-spacing:-0.6px">CARIBBEAN</span>Caribbean Secretary O..</div>
<div class="t" style="top:540.78px;font-size:10.8px;line-height:12.96px;color:#1a1a1a;letter-spacing:0.25px;left:-101.35px;width:400px;text-align:right;">86,695</div>
<div class="t" style="top:540.78px;font-size:10.8px;line-height:12.96px;color:#1a1a1a;letter-spacing:0.25px;left:-7.35px;width:400px;text-align:right;">27,499</div>
<div class="t" style="top:540.78px;font-size:10.8px;line-height:12.96px;color:#1a1a1a;letter-spacing:0.25px;left:180.65px;width:400px;text-align:right;">604,502</div>
<div class="t" style="top:540.78px;font-size:10.8px;line-height:12.96px;color:#1a1a1a;letter-spacing:0.25px;left:274.65px;width:400px;text-align:right;">22,469</div>
<div class="t" style="top:541.40px;font-size:11.3px;line-height:13.56px;font-weight:bold;left:368.30px;width:400px;text-align:right;transform:scaleX(1.26);transform-origin:100% 50%">741,165</div>
<div class="b" style="left:13px;top:557px;width:197px;height:21px;border:1px solid #929292;background:#e6e6e6"></div>
<div class="b" style="left:209px;top:557px;width:95px;height:21px;border:1px solid #929292;background:#e6e6e6"></div>
<div class="b" style="left:303px;top:557px;width:95px;height:21px;border:1px solid #929292;background:#e6e6e6"></div>
<div class="b" style="left:397px;top:557px;width:95px;height:21px;border:1px solid #929292;background:#e6e6e6"></div>
<div class="b" style="left:491px;top:557px;width:95px;height:21px;border:1px solid #929292;background:#e6e6e6"></div>
<div class="b" style="left:585px;top:557px;width:95px;height:21px;border:1px solid #929292;background:#e6e6e6"></div>
<div class="b" style="left:679px;top:557px;width:95px;height:21px;border:1px solid #929292;background:#e6e6e6"></div>
<div class="t" style="top:562.08px;font-size:10.9px;line-height:13.08px;-webkit-text-stroke:0.2px #000;left:19.3px;"><span style="margin-right:7.6px;letter-spacing:-0.6px">CASHCONNEC</span>Cash Connection</div>
<div class="t" style="top:560.78px;font-size:10.8px;line-height:12.96px;color:#1a1a1a;letter-spacing:0.25px;left:86.65px;width:400px;text-align:right;">4,550</div>
<div class="t" style="top:560.78px;font-size:10.8px;line-height:12.96px;color:#1a1a1a;letter-spacing:0.25px;left:180.65px;width:400px;text-align:right;">4,550</div>
<div class="t" style="top:560.78px;font-size:10.8px;line-height:12.96px;color:#1a1a1a;letter-spacing:0.25px;left:274.65px;width:400px;text-align:right;">4,550</div>
<div class="t" style="top:561.40px;font-size:11.3px;line-height:13.56px;font-weight:bold;left:368.30px;width:400px;text-align:right;transform:scaleX(1.26);transform-origin:100% 50%">13,650</div>
<div class="b" style="left:13px;top:577px;width:197px;height:21px;border:1px solid #929292;background:#fff"></div>
<div class="b" style="left:209px;top:577px;width:95px;height:21px;border:1px solid #929292;background:#fff"></div>
<div class="b" style="left:303px;top:577px;width:95px;height:21px;border:1px solid #929292;background:#fff"></div>
<div class="b" style="left:397px;top:577px;width:95px;height:21px;border:1px solid #929292;background:#fff"></div>
<div class="b" style="left:491px;top:577px;width:95px;height:21px;border:1px solid #929292;background:#fff"></div>
<div class="b" style="left:585px;top:577px;width:95px;height:21px;border:1px solid #929292;background:#fff"></div>
<div class="b" style="left:679px;top:577px;width:95px;height:21px;border:1px solid #929292;background:#fff"></div>
<div class="t" style="top:582.08px;font-size:10.9px;line-height:13.08px;-webkit-text-stroke:0.2px #000;left:19.3px;"><span style="margin-right:7.6px;letter-spacing:-0.6px">CHOCOLATE</span>Chocolate By Design</div>
<div class="t" style="top:580.78px;font-size:10.8px;line-height:12.96px;color:#1a1a1a;letter-spacing:0.25px;left:-101.35px;width:400px;text-align:right;">500</div>
<div class="t" style="top:580.78px;font-size:10.8px;line-height:12.96px;color:#1a1a1a;letter-spacing:0.25px;left:-7.35px;width:400px;text-align:right;">500</div>
<div class="t" style="top:580.78px;font-size:10.8px;line-height:12.96px;color:#1a1a1a;letter-spacing:0.25px;left:86.65px;width:400px;text-align:right;">500</div>
<div class="t" style="top:580.78px;font-size:10.8px;line-height:12.96px;color:#1a1a1a;letter-spacing:0.25px;left:180.65px;width:400px;text-align:right;">500</div>
<div class="t" style="top:580.78px;font-size:10.8px;line-height:12.96px;color:#1a1a1a;letter-spacing:0.25px;left:274.65px;width:400px;text-align:right;">500</div>
<div class="t" style="top:581.40px;font-size:11.3px;line-height:13.56px;font-weight:bold;left:368.30px;width:400px;text-align:right;transform:scaleX(1.26);transform-origin:100% 50%">2,500</div>
<div class="b" style="left:13px;top:597px;width:197px;height:21px;border:1px solid #929292;background:#e6e6e6"></div>
<div class="b" style="left:209px;top:597px;width:95px;height:21px;border:1px solid #929292;background:#e6e6e6"></div>
<div class="b" style="left:303px;top:597px;width:95px;height:21px;border:1px solid #929292;background:#e6e6e6"></div>
<div class="b" style="left:397px;top:597px;width:95px;height:21px;border:1px solid #929292;background:#e6e6e6"></div>
<div class="b" style="left:491px;top:597px;width:95px;height:21px;border:1px solid #929292;background:#e6e6e6"></div>
<div class="b" style="left:585px;top:597px;width:95px;height:21px;border:1px solid #929292;background:#e6e6e6"></div>
<div class="b" style="left:679px;top:597px;width:95px;height:21px;border:1px solid #929292;background:#e6e6e6"></div>
<div class="t" style="top:602.08px;font-size:10.9px;line-height:13.08px;-webkit-text-stroke:0.2px #000;left:19.3px;"><span style="margin-right:7.6px;letter-spacing:-0.6px">CJOEQUIP</span>Jersey Central Office Eq..</div>
<div class="t" style="top:600.78px;font-size:10.8px;line-height:12.96px;color:#1a1a1a;letter-spacing:0.25px;left:-101.35px;width:400px;text-align:right;">25,000</div>
<div class="t" style="top:600.78px;font-size:10.8px;line-height:12.96px;color:#1a1a1a;letter-spacing:0.25px;left:-7.35px;width:400px;text-align:right;">85,000</div>
<div class="t" style="top:600.78px;font-size:10.8px;line-height:12.96px;color:#1a1a1a;letter-spacing:0.25px;left:86.65px;width:400px;text-align:right;">30,000</div>
<div class="t" style="top:600.78px;font-size:10.8px;line-height:12.96px;color:#1a1a1a;letter-spacing:0.25px;left:180.65px;width:400px;text-align:right;">34,955</div>
<div class="t" style="top:600.78px;font-size:10.8px;line-height:12.96px;color:#1a1a1a;letter-spacing:0.25px;left:274.65px;width:400px;text-align:right;">60,247</div>
<div class="t" style="top:601.40px;font-size:11.3px;line-height:13.56px;font-weight:bold;left:368.30px;width:400px;text-align:right;transform:scaleX(1.26);transform-origin:100% 50%">235,202</div>
<div class="b" style="left:13px;top:617px;width:197px;height:21px;border:1px solid #929292;background:#fff"></div>
<div class="b" style="left:209px;top:617px;width:95px;height:21px;border:1px solid #929292;background:#fff"></div>
<div class="b" style="left:303px;top:617px;width:95px;height:21px;border:1px solid #929292;background:#fff"></div>
<div class="b" style="left:397px;top:617px;width:95px;height:21px;border:1px solid #929292;background:#fff"></div>
<div class="b" style="left:491px;top:617px;width:95px;height:21px;border:1px solid #929292;background:#fff"></div>
<div class="b" style="left:585px;top:617px;width:95px;height:21px;border:1px solid #929292;background:#fff"></div>
<div class="b" style="left:679px;top:617px;width:95px;height:21px;border:1px solid #929292;background:#fff"></div>
<div class="t" style="top:622.08px;font-size:10.9px;line-height:13.08px;-webkit-text-stroke:0.2px #000;left:19.3px;"><span style="margin-right:7.6px;letter-spacing:-0.6px">CONSTPLAZA</span>Plaza Construction</div>
<div class="t" style="top:620.78px;font-size:10.8px;line-height:12.96px;color:#1a1a1a;letter-spacing:0.25px;left:-101.35px;width:400px;text-align:right;">14,330</div>
<div class="t" style="top:620.78px;font-size:10.8px;line-height:12.96px;color:#1a1a1a;letter-spacing:0.25px;left:-7.35px;width:400px;text-align:right;">25,736</div>
<div class="t" style="top:620.78px;font-size:10.8px;line-height:12.96px;color:#1a1a1a;letter-spacing:0.25px;left:86.65px;width:400px;text-align:right;">12,091</div>
<div class="t" style="top:620.78px;font-size:10.8px;line-height:12.96px;color:#1a1a1a;letter-spacing:0.25px;left:180.65px;width:400px;text-align:right;">38,096</div>
<div class="t" style="top:620.78px;font-size:10.8px;line-height:12.96px;color:#1a1a1a;letter-spacing:0.25px;left:274.65px;width:400px;text-align:right;">15,170</div>
<div class="t" style="top:621.40px;font-size:11.3px;line-height:13.56px;font-weight:bold;left:368.30px;width:400px;text-align:right;transform:scaleX(1.26);transform-origin:100% 50%">97,131</div>
<div class="b" style="left:190.3px;top:258px;width:18.5px;height:19px;overflow:hidden">
<div class="t" style="top:2.81px;font-size:13.2px;line-height:15.84px;-webkit-text-stroke:0.3px #000;left:-381.50px;width:400px;text-align:right;">School</div>
</div>
<div class="b" style="left:773px;top:217px;width:22px;height:410px;background:#f3f3f3"></div>
<div class="b" style="left:773px;top:217px;width:22px;height:232px;background:#dedede"></div>
<div class="b" style="left:15px;top:142px;width:169px;height:135px;background:#f9f1e7;border:1px solid #9a9a9a;border-top:none"></div>
<div class="b" style="left:16px;top:193px;width:167px;height:17px;background:#ebe6df"></div>
<div class="t" style="top:144.80px;font-size:11.3px;line-height:13.56px;-webkit-text-stroke:0.25px #000;left:27.4px;">Country</div>
<div class="t" style="top:161.80px;font-size:11.3px;line-height:13.56px;-webkit-text-stroke:0.25px #000;left:27.4px;">State</div>
<div class="t" style="top:178.80px;font-size:11.3px;line-height:13.56px;-webkit-text-stroke:0.25px #000;left:27.4px;">City</div>
<div class="t" style="top:195.80px;font-size:11.3px;line-height:13.56px;-webkit-text-stroke:0.25px #000;left:27.4px;">Customer</div>
<div class="t" style="top:212.80px;font-size:11.3px;line-height:13.56px;-webkit-text-stroke:0.25px #000;left:27.4px;">Doc No</div>
<div class="t" style="top:229.80px;font-size:11.3px;line-height:13.56px;-webkit-text-stroke:0.25px #000;left:27.4px;">Item</div>
<div class="t" style="top:246.80px;font-size:11.3px;line-height:13.56px;-webkit-text-stroke:0.25px #000;left:27.4px;">Salesperson</div>
<div class="t" style="top:263.80px;font-size:11.3px;line-height:13.56px;-webkit-text-stroke:0.25px #000;left:27.4px;">Warehouse</div>
<div class="b" style="left:18.4px;top:140px;width:3.8px;height:133.5px;background:#ff5a14;border-radius:2px"></div>
<div class="b" style="left:16px;top:143px;width:171px;height:3.4px;background:#ff5a14;border-radius:2px"></div>
<div class="b" style="left:183px;top:144px;width:3.8px;height:131.5px;background:#ff5a14;border-radius:2px"></div>
<div class="b" style="left:13px;top:276px;width:169px;height:2.7px;background:#ff5a14;border-radius:2px"></div>
<div class="b" style="left:1000px;top:71px;width:25px;height:46px;background:#f6f6f6"></div>
<div class="t" style="top:70.99px;font-size:11px;line-height:13.2px;-webkit-text-stroke:0.2px #000;left:1030.3px;">FYear</div>
<div class="b" style="left:1031px;top:87px;width:15px;height:15px;background:#fff;border:1px solid #cdcdcd"></div>
<div class="t" style="top:89.20px;font-size:11.3px;line-height:13.56px;-webkit-text-stroke:0.35px #000;left:1051.5px;">(All)</div>
<div class="b" style="left:1031px;top:105px;width:15px;height:15px;background:#fff;border:1px solid #cdcdcd"></div>
<div class="t" style="top:107.20px;font-size:11.3px;line-height:13.56px;-webkit-text-stroke:0.35px #000;left:1051.5px;">2015</div>
<div class="b" style="left:1031px;top:123px;width:15px;height:15px;background:#fff;border:1px solid #cdcdcd"></div>
<div class="t" style="top:125.20px;font-size:11.3px;line-height:13.56px;-webkit-text-stroke:0.35px #000;left:1051.5px;">2016</div>
<div class="b" style="left:1031px;top:141px;width:15px;height:15px;background:#fff;border:1px solid #cdcdcd"></div>
<div class="t" style="top:143.20px;font-size:11.3px;line-height:13.56px;-webkit-text-stroke:0.35px #000;left:1051.5px;">2017</div>
<div class="b" style="left:1031px;top:159px;width:15px;height:15px;background:#fff;border:1px solid #cdcdcd"></div>
<div class="t" style="top:161.20px;font-size:11.3px;line-height:13.56px;-webkit-text-stroke:0.35px #000;left:1051.5px;">2018</div>
<div class="b" style="left:1031px;top:177px;width:15px;height:15px;background:#fff;border:1px solid #cdcdcd"></div>
<div class="t" style="top:179.20px;font-size:11.3px;line-height:13.56px;-webkit-text-stroke:0.35px #000;left:1051.5px;">2019</div>
<div class="b" style="left:1031px;top:195px;width:15px;height:15px;background:#fff;border:1px solid #cdcdcd"></div>
<div class="t" style="top:197.20px;font-size:11.3px;line-height:13.56px;-webkit-text-stroke:0.35px #000;left:1051.5px;">2020</div>
<div class="b" style="left:1031px;top:213px;width:15px;height:15px;background:#fff;border:1px solid #cdcdcd"></div>
<div class="t" style="top:215.20px;font-size:11.3px;line-height:13.56px;-webkit-text-stroke:0.35px #000;left:1051.5px;">2021</div>
<div class="b" style="left:1031px;top:231px;width:15px;height:15px;background:#fff;border:1px solid #5a5a5a"></div>
<svg class="b" style="left:1031px;top:231px" width="15" height="15" viewBox="0 0 15 15"><path d="M3.2 7.6 L6 10.6 L11.8 3.8" fill="none" stroke="#555" stroke-width="1.3"/></svg>
<div class="t" style="top:233.20px;font-size:11.3px;line-height:13.56px;-webkit-text-stroke:0.35px #000;left:1051.5px;">2022</div>
<div class="b" style="left:1031px;top:249px;width:15px;height:15px;background:#fff;border:1px solid #cdcdcd"></div>
<div class="t" style="top:251.20px;font-size:11.3px;line-height:13.56px;-webkit-text-stroke:0.35px #000;left:1051.5px;">2023</div>
<div class="b" style="left:1031px;top:274px;width:40px;height:16px;background:#ebebeb"></div>
<div class="b" style="left:1077px;top:274px;width:39px;height:16px;background:#ebebeb"></div>
<div class="t" style="top:275.74px;font-size:12px;line-height:14.4px;color:#b3b3b3;left:1031.0px;width:40px;text-align:center;">Can...</div>
<div class="t" style="top:275.74px;font-size:12px;line-height:14.4px;color:#b3b3b3;left:1076.5px;width:40px;text-align:center;">Apply</div>
<div class="t" style="top:297.49px;font-size:11px;line-height:13.2px;-webkit-text-stroke:0.2px #000;left:1029.5px;">FPeriod</div>
<div class="b" style="left:1030px;top:313px;width:15px;height:15px;background:#fff;border:1px solid #cdcdcd"></div>
<div class="t" style="top:315.20px;font-size:11.3px;line-height:13.56px;-webkit-text-stroke:0.35px #000;left:1050.5px;">(All)</div>
<div class="b" style="left:1030px;top:331px;width:15px;height:15px;background:#fff;border:1px solid #5a5a5a"></div>
<svg class="b" style="left:1030px;top:331px" width="15" height="15" viewBox="0 0 15 15"><path d="M3.2 7.6 L6 10.6 L11.8 3.8" fill="none" stroke="#555" stroke-width="1.3"/></svg>
<div class="t" style="top:333.20px;font-size:11.3px;line-height:13.56px;-webkit-text-stroke:0.35px #000;left:1050.5px;">01</div>
<div class="b" style="left:1030px;top:349px;width:15px;height:15px;background:#fff;border:1px solid #5a5a5a"></div>
<svg class="b" style="left:1030px;top:349px" width="15" height="15" viewBox="0 0 15 15"><path d="M3.2 7.6 L6 10.6 L11.8 3.8" fill="none" stroke="#555" stroke-width="1.3"/></svg>
<div class="t" style="top:351.20px;font-size:11.3px;line-height:13.56px;-webkit-text-stroke:0.35px #000;left:1050.5px;">02</div>
<div class="b" style="left:1030px;top:367px;width:15px;height:15px;background:#fff;border:1px solid #5a5a5a"></div>
<svg class="b" style="left:1030px;top:367px" width="15" height="15" viewBox="0 0 15 15"><path d="M3.2 7.6 L6 10.6 L11.8 3.8" fill="none" stroke="#555" stroke-width="1.3"/></svg>
<div class="t" style="top:369.20px;font-size:11.3px;line-height:13.56px;-webkit-text-stroke:0.35px #000;left:1050.5px;">03</div>
<div class="b" style="left:1030px;top:385px;width:15px;height:15px;background:#fff;border:1px solid #5a5a5a"></div>
<svg class="b" style="left:1030px;top:385px" width="15" height="15" viewBox="0 0 15 15"><path d="M3.2 7.6 L6 10.6 L11.8 3.8" fill="none" stroke="#555" stroke-width="1.3"/></svg>
<div class="t" style="top:387.20px;font-size:11.3px;line-height:13.56px;-webkit-text-stroke:0.35px #000;left:1050.5px;">04</div>
<div class="b" style="left:1030px;top:403px;width:15px;height:15px;background:#fff;border:1px solid #5a5a5a"></div>
<svg class="b" style="left:1030px;top:403px" width="15" height="15" viewBox="0 0 15 15"><path d="M3.2 7.6 L6 10.6 L11.8 3.8" fill="none" stroke="#555" stroke-width="1.3"/></svg>
<div class="t" style="top:405.20px;font-size:11.3px;line-height:13.56px;-webkit-text-stroke:0.35px #000;left:1050.5px;">05</div>
<div class="b" style="left:1030px;top:421px;width:15px;height:15px;background:#fff;border:1px solid #cdcdcd"></div>
<div class="t" style="top:423.20px;font-size:11.3px;line-height:13.56px;-webkit-text-stroke:0.35px #000;left:1050.5px;">06</div>
<div class="b" style="left:1030px;top:439px;width:15px;height:15px;background:#fff;border:1px solid #cdcdcd"></div>
<div class="t" style="top:441.20px;font-size:11.3px;line-height:13.56px;-webkit-text-stroke:0.35px #000;left:1050.5px;">07</div>
<div class="b" style="left:1030px;top:457px;width:15px;height:15px;background:#fff;border:1px solid #cdcdcd"></div>
<div class="t" style="top:459.20px;font-size:11.3px;line-height:13.56px;-webkit-text-stroke:0.35px #000;left:1050.5px;">08</div>
<div class="b" style="left:1030px;top:475px;width:15px;height:15px;background:#fff;border:1px solid #cdcdcd"></div>
<div class="t" style="top:477.20px;font-size:11.3px;line-height:13.56px;-webkit-text-stroke:0.35px #000;left:1050.5px;">09</div>
<div class="b" style="left:1030px;top:493px;width:15px;height:15px;background:#fff;border:1px solid #cdcdcd"></div>
<div class="t" style="top:495.20px;font-size:11.3px;line-height:13.56px;-webkit-text-stroke:0.35px #000;left:1050.5px;">10</div>
<div class="b" style="left:1030px;top:511px;width:15px;height:15px;background:#fff;border:1px solid #cdcdcd"></div>
<div class="t" style="top:513.20px;font-size:11.3px;line-height:13.56px;-webkit-text-stroke:0.35px #000;left:1050.5px;">11</div>
<div class="b" style="left:1030px;top:529px;width:15px;height:15px;background:#fff;border:1px solid #cdcdcd"></div>
<div class="t" style="top:531.20px;font-size:11.3px;line-height:13.56px;-webkit-text-stroke:0.35px #000;left:1050.5px;">12</div>
<div class="b" style="left:1031px;top:555px;width:40px;height:16px;background:#ebebeb"></div>
<div class="b" style="left:1077px;top:555px;width:39px;height:16px;background:#ebebeb"></div>
<div class="t" style="top:556.74px;font-size:12px;line-height:14.4px;color:#b3b3b3;left:1031.0px;width:40px;text-align:center;">Can...</div>
<div class="t" style="top:556.74px;font-size:12px;line-height:14.4px;color:#b3b3b3;left:1076.5px;width:40px;text-align:center;">Apply</div>
<div class="b" style="left:1143px;top:71px;width:69px;height:22px;background:#333"></div>
<svg class="b" style="left:1173px;top:77px" width="8" height="10" viewBox="0 0 8 10"><path d="M2 1 L6 5 L2 9" fill="none" stroke="#ddd" stroke-width="1.2"/></svg>
<div class="b" style="left:1124px;top:99px;width:110px;height:51px;background:#f5eadb;border:1px solid #c9c2b8"></div>
<div class="t" style="top:106.27px;font-size:12.5px;line-height:15.0px;-webkit-text-stroke:0.3px #000;left:1126.0px;width:100px;text-align:center;">Customer</div>
<div class="b" style="left:1128px;top:121px;width:98px;height:20px;background:#f9f2e8;border:1px solid #8c8c8c"></div>
<div class="t" style="top:124.14px;font-size:12px;line-height:14.4px;-webkit-text-stroke:0.25px #000;left:1132.5px;">(All)</div>
<svg class="b" style="left:1212px;top:128.0px" width="8" height="6" viewBox="0 0 8 6"><path d="M0.5 0.8 H7.5 L4 5 Z" fill="#000"/></svg>
<div class="b" style="left:1124px;top:154px;width:110px;height:51px;background:#f5eadb;border:1px solid #c9c2b8"></div>
<div class="t" style="top:161.27px;font-size:12.5px;line-height:15.0px;-webkit-text-stroke:0.3px #000;left:1126.0px;width:100px;text-align:center;">Doc No</div>
<div class="b" style="left:1128px;top:176px;width:98px;height:20px;background:#f9f2e8;border:1px solid #8c8c8c"></div>
<div class="t" style="top:179.14px;font-size:12px;line-height:14.4px;-webkit-text-stroke:0.25px #000;left:1132.5px;">(All)</div>
<svg class="b" style="left:1212px;top:183.0px" width="8" height="6" viewBox="0 0 8 6"><path d="M0.5 0.8 H7.5 L4 5 Z" fill="#000"/></svg>
<div class="b" style="left:1124px;top:209px;width:110px;height:51px;background:#f5eadb;border:1px solid #c9c2b8"></div>
<div class="t" style="top:216.27px;font-size:12.5px;line-height:15.0px;-webkit-text-stroke:0.3px #000;left:1126.0px;width:100px;text-align:center;">Item</div>
<div class="b" style="left:1128px;top:231px;width:98px;height:20px;background:#f9f2e8;border:1px solid #8c8c8c"></div>
<div class="t" style="top:234.14px;font-size:12px;line-height:14.4px;-webkit-text-stroke:0.25px #000;left:1132.5px;">(All)</div>
<svg class="b" style="left:1212px;top:238.0px" width="8" height="6" viewBox="0 0 8 6"><path d="M0.5 0.8 H7.5 L4 5 Z" fill="#000"/></svg>
<div class="b" style="left:1124px;top:264px;width:110px;height:51px;background:#f5eadb;border:1px solid #c9c2b8"></div>
<div class="t" style="top:271.27px;font-size:12.5px;line-height:15.0px;-webkit-text-stroke:0.3px #000;left:1126.0px;width:100px;text-align:center;">Warehouse</div>
<div class="b" style="left:1128px;top:286px;width:98px;height:20px;background:#f9f2e8;border:1px solid #8c8c8c"></div>
<div class="t" style="top:289.14px;font-size:12px;line-height:14.4px;-webkit-text-stroke:0.25px #000;left:1132.5px;">(All)</div>
<svg class="b" style="left:1212px;top:293.0px" width="8" height="6" viewBox="0 0 8 6"><path d="M0.5 0.8 H7.5 L4 5 Z" fill="#000"/></svg>
<div class="t" style="top:326.00px;font-size:11.3px;line-height:13.56px;letter-spacing:0.3px;-webkit-text-stroke:0.25px #000;left:1121.0px;width:110px;text-align:center;">Potential huge</div>
<div class="t" style="top:341.20px;font-size:11.3px;line-height:13.56px;letter-spacing:0.3px;-webkit-text-stroke:0.25px #000;left:1121.0px;width:110px;text-align:center;">dataset when</div>
<div class="t" style="top:356.00px;font-size:11.3px;line-height:13.56px;letter-spacing:0.3px;-webkit-text-stroke:0.25px #000;left:1121.0px;width:110px;text-align:center;">showing 3+</div>
<div class="t" style="top:370.80px;font-size:11.3px;line-height:13.56px;letter-spacing:0.3px;-webkit-text-stroke:0.25px #000;left:1121.0px;width:110px;text-align:center;">dimensions!</div>
<div class="t" style="top:393.17px;font-size:12.5px;line-height:15.0px;-webkit-text-stroke:0.3px #000;left:1122.0px;width:110px;text-align:center;">Branch</div>
<div class="b" style="left:1124px;top:409px;width:116px;height:20px;background:#fff;border:1px solid #8c8c8c"></div>
<div class="t" style="top:412.54px;font-size:12px;line-height:14.4px;-webkit-text-stroke:0.25px #000;left:1128.5px;">(All)</div>
<svg class="b" style="left:1215.5px;top:416.0px" width="8" height="6" viewBox="0 0 8 6"><path d="M0.5 0.8 H7.5 L4 5 Z" fill="#000"/></svg>
<div class="t" style="top:440.70px;font-size:11.3px;line-height:13.56px;-webkit-text-stroke:0.25px #000;left:1122.0px;width:110px;text-align:center;">Cust ID Name</div>
<div class="b" style="left:1123px;top:456px;width:120px;height:20px;background:#fff;border:1px solid #8c8c8c"></div>
<div class="t" style="top:482.90px;font-size:11.3px;line-height:13.56px;-webkit-text-stroke:0.25px #000;left:1122.0px;width:110px;text-align:center;">Item ID Desc</div>
<div class="b" style="left:1123px;top:498px;width:120px;height:20px;background:#fff;border:1px solid #8c8c8c"></div>
<div class="t" style="top:526.20px;font-size:11.3px;line-height:13.56px;-webkit-text-stroke:0.25px #000;left:1123.3px;">Item Cat</div>
<div class="b" style="left:1124px;top:541px;width:116px;height:20px;background:#fff;border:1px solid #8c8c8c"></div>
<div class="t" style="top:544.54px;font-size:12px;line-height:14.4px;-webkit-text-stroke:0.25px #000;left:1128.5px;">(All)</div>
<svg class="b" style="left:1216px;top:548.0px" width="8" height="6" viewBox="0 0 8 6"><path d="M0.5 0.8 H7.5 L4 5 Z" fill="#000"/></svg>
<div class="t" style="top:573.20px;font-size:11.3px;line-height:13.56px;-webkit-text-stroke:0.25px #000;left:1123.3px;">Salesperson</div>
<div class="b" style="left:1124px;top:588px;width:116px;height:20px;background:#fff;border:1px solid #8c8c8c"></div>
<div class="t" style="top:591.54px;font-size:12px;line-height:14.4px;-webkit-text-stroke:0.25px #000;left:1128.5px;">(All)</div>
<svg class="b" style="left:1216px;top:595.0px" width="8" height="6" viewBox="0 0 8 6"><path d="M0.5 0.8 H7.5 L4 5 Z" fill="#000"/></svg>
<div class="b" style="left:1228px;top:0px;width:2px;height:629px;background:#ff0000"></div>
<div class="b" style="left:0px;top:627px;width:1230px;height:2px;background:#ff0000"></div>
</body></html>
